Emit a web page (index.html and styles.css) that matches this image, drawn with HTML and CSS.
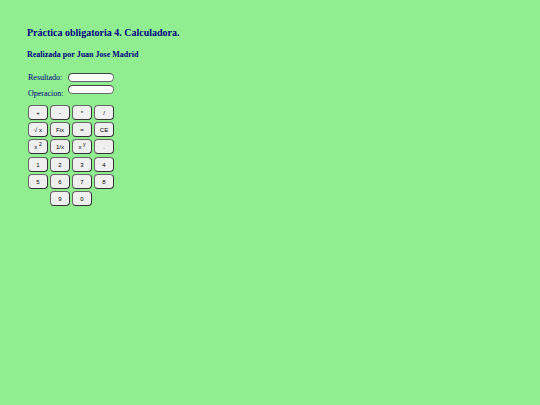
FILE: index.html
```html
<!DOCTYPE html>
<html lang="es">
<head>
<meta charset="utf-8">
<title>Calculadora</title>
<link rel="stylesheet" href="styles.css">
</head>
<body>
<h1>Práctica obligatoria 4. Calculadora.</h1>
<h2>Realizada por Juan Jose Madrid</h2>
<form class="calculator">
  <div class="fields">
    <label for="resultado">Resultado:</label>
    <input id="resultado" type="text">
    <label class="lower" for="operacion">Operacion:</label>
    <input id="operacion" type="text">
  </div>
  <div class="keys">
    <button type="button">+</button>
    <button type="button">-</button>
    <button type="button">*</button>
    <button type="button">/</button>
    <button type="button">√ x</button>
    <button type="button">Fix</button>
    <button type="button">=</button>
    <button type="button">CE</button>
    <button type="button">x <sup>2</sup></button>
    <button type="button">1/x</button>
    <button type="button">x <sup>y</sup></button>
    <button type="button">.</button>
  </div>
  <div class="keys">
    <button type="button">1</button>
    <button type="button">2</button>
    <button type="button">3</button>
    <button type="button">4</button>
    <button type="button">5</button>
    <button type="button">6</button>
    <button type="button">7</button>
    <button type="button">8</button>
    <button type="button" class="second">9</button>
    <button type="button">0</button>
  </div>
</form>
</body>
</html>
```
FILE: styles.css
```css
body {
  margin: 27px;
  background: #90ee90;
  color: #000080;
  font-family: "Liberation Serif", "Times New Roman", serif;
}

h1 {
  margin: 0 0 10px;
  font-size: 10px;
  line-height: 12px;
}

h2 {
  margin: 0 0 12px;
  font-size: 8px;
  line-height: 12px;
}

.calculator {
  padding-left: 1px;
}

.fields {
  display: grid;
  grid-template-columns: 38px 46px;
  grid-auto-rows: 10px;
  row-gap: 2px;
  column-gap: 2px;
  margin-bottom: 10px;
  font-size: 8px;
  line-height: 10px;
}

.lower {
  padding-top: 4px;
}

input {
  box-sizing: border-box;
  width: 100%;
  height: 9px;
  padding: 0 3px;
  border: 1px solid;
  border-color: #444 #666 #666 #444;
  border-radius: 5px;
  background: #fff;
  font-size: 6px;
}

.keys {
  display: grid;
  grid-template-columns: repeat(4, 20px);
  grid-auto-rows: 15px;
  gap: 2px;
  margin-bottom: 3px;
}

button {
  padding: 0;
  border: 1px solid;
  border-color: #666 #333 #333 #666;
  border-radius: 4px;
  background: #efefef;
  color: #000;
  font-family: "Liberation Sans", Arial, sans-serif;
  font-size: 6px;
  line-height: 8px;
}

sup {
  font-size: 5px;
  line-height: 0;
}

.second {
  grid-column: 2;
}
```
